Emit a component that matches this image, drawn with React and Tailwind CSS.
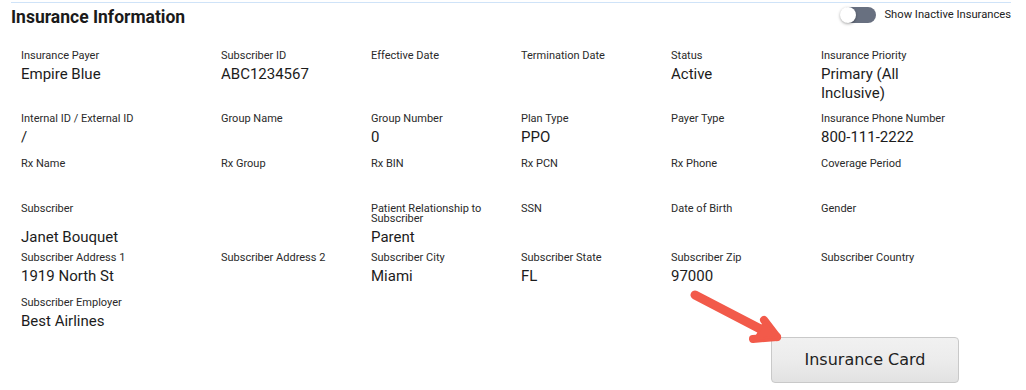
import React from 'react';

const rows = [
  {
    pb: 'pb-[11px]',
    cells: [
      ['Insurance Payer', 'Empire Blue'],
      ['Subscriber ID', 'ABC1234567'],
      ['Effective Date', ''],
      ['Termination Date', ''],
      ['Status', 'Active'],
      ['Insurance Priority', 'Primary (All Inclusive)']
    ]
  },
  {
    pb: 'pb-[12px]',
    cells: [
      ['Internal ID / External ID', '/'],
      ['Group Name', ''],
      ['Group Number', '0'],
      ['Plan Type', 'PPO'],
      ['Payer Type', ''],
      ['Insurance Phone Number', '800-111-2222']
    ]
  },
  {
    pb: 'pb-[12px]',
    cells: [
      ['Rx Name', ''],
      ['Rx Group', ''],
      ['Rx BIN', ''],
      ['Rx PCN', ''],
      ['Rx Phone', ''],
      ['Coverage Period', '']
    ]
  },
  {
    pb: 'pb-[6px]',
    cells: [
      ['Subscriber', 'Janet Bouquet'],
      ['', ''],
      ['Patient Relationship to Subscriber', 'Parent'],
      ['SSN', ''],
      ['Date of Birth', ''],
      ['Gender', '']
    ]
  },
  {
    pb: 'pb-[12px]',
    cells: [
      ['Subscriber Address 1', '1919 North St'],
      ['Subscriber Address 2', ''],
      ['Subscriber City', 'Miami'],
      ['Subscriber State', 'FL'],
      ['Subscriber Zip', '97000'],
      ['Subscriber Country', '']
    ]
  },
  {
    pb: 'pb-0',
    cells: [['Subscriber Employer', 'Best Airlines']]
  }
];

const cols = 'grid grid-cols-[200px_150px_150px_150px_150px_150px]';

const App = () => {
  return (
    <div className="relative w-[1026px] h-[390px] bg-white font-['Roboto',sans-serif] overflow-hidden">
      <div className="ml-[11px] mr-[15px] mt-[2px] border-t border-[#cfe3f8]">
        {/* Header */}
        <div className="flex items-start justify-between">
          <h2 className="mt-[2px] text-[17.5px] leading-[24px] font-bold text-[#1a1a1a]">
            Insurance Information
          </h2>
          <div className="flex items-center mt-[4px]">
            <div className="relative w-[34px] h-[16px] rounded-full bg-[#687080]">
              <span className="absolute -left-[2px] top-0 w-[16px] h-[16px] rounded-full bg-white shadow-[0_1px_3px_rgba(0,0,0,0.35)]"></span>
            </div>
            <span className="ml-[8px] text-[11.2px] leading-[16px] text-[#222]">Show Inactive Insurances</span>
          </div>
        </div>

        {/* Fields */}
        <div className="pl-[10px] mt-[22px]">
          {rows.map((row, i) => (
            <div key={i} className={row.pb}>
              <div className={cols}>
                {row.cells.map(([label], j) => (
                  <div key={j} className="pr-[8px] text-[11px] leading-[10px] text-[#2a2a2a]">{label}</div>
                ))}
              </div>
              <div className={`${cols} mt-[4px]`}>
                {row.cells.map(([, value], j) => (
                  <div key={j} className="pr-[8px] text-[15px] leading-[19px] min-h-[19px] text-[#1c1c1c]">{value}</div>
                ))}
              </div>
            </div>
          ))}
        </div>

        <div className="flex justify-end pr-[52px] mt-[6px]">
          <button className="w-[188px] h-[46px] rounded-[4px] border border-[#c9c9c9] bg-gradient-to-b from-[#f1f1f1] via-[#ececec] to-[#e2e2e2] font-['DejaVu_Sans',sans-serif] text-[16px] text-[#222]">
            Insurance Card
          </button>
        </div>
      </div>

      {/* Annotation arrow */}
      <svg className="absolute left-0 top-0 pointer-events-none" width="1026" height="390">
        <g stroke="#f25a4a" strokeLinecap="round" strokeLinejoin="round" fill="#f25a4a">
          <line x1="695" y1="295" x2="772" y2="335" strokeWidth="9" />
          <line x1="764" y1="320" x2="777" y2="337" strokeWidth="8" />
          <line x1="753" y1="339" x2="777" y2="337" strokeWidth="8" />
          <polygon points="777,337 764,322 755,339" strokeWidth="2" />
        </g>
      </svg>
    </div>
  );
};

export default App;
